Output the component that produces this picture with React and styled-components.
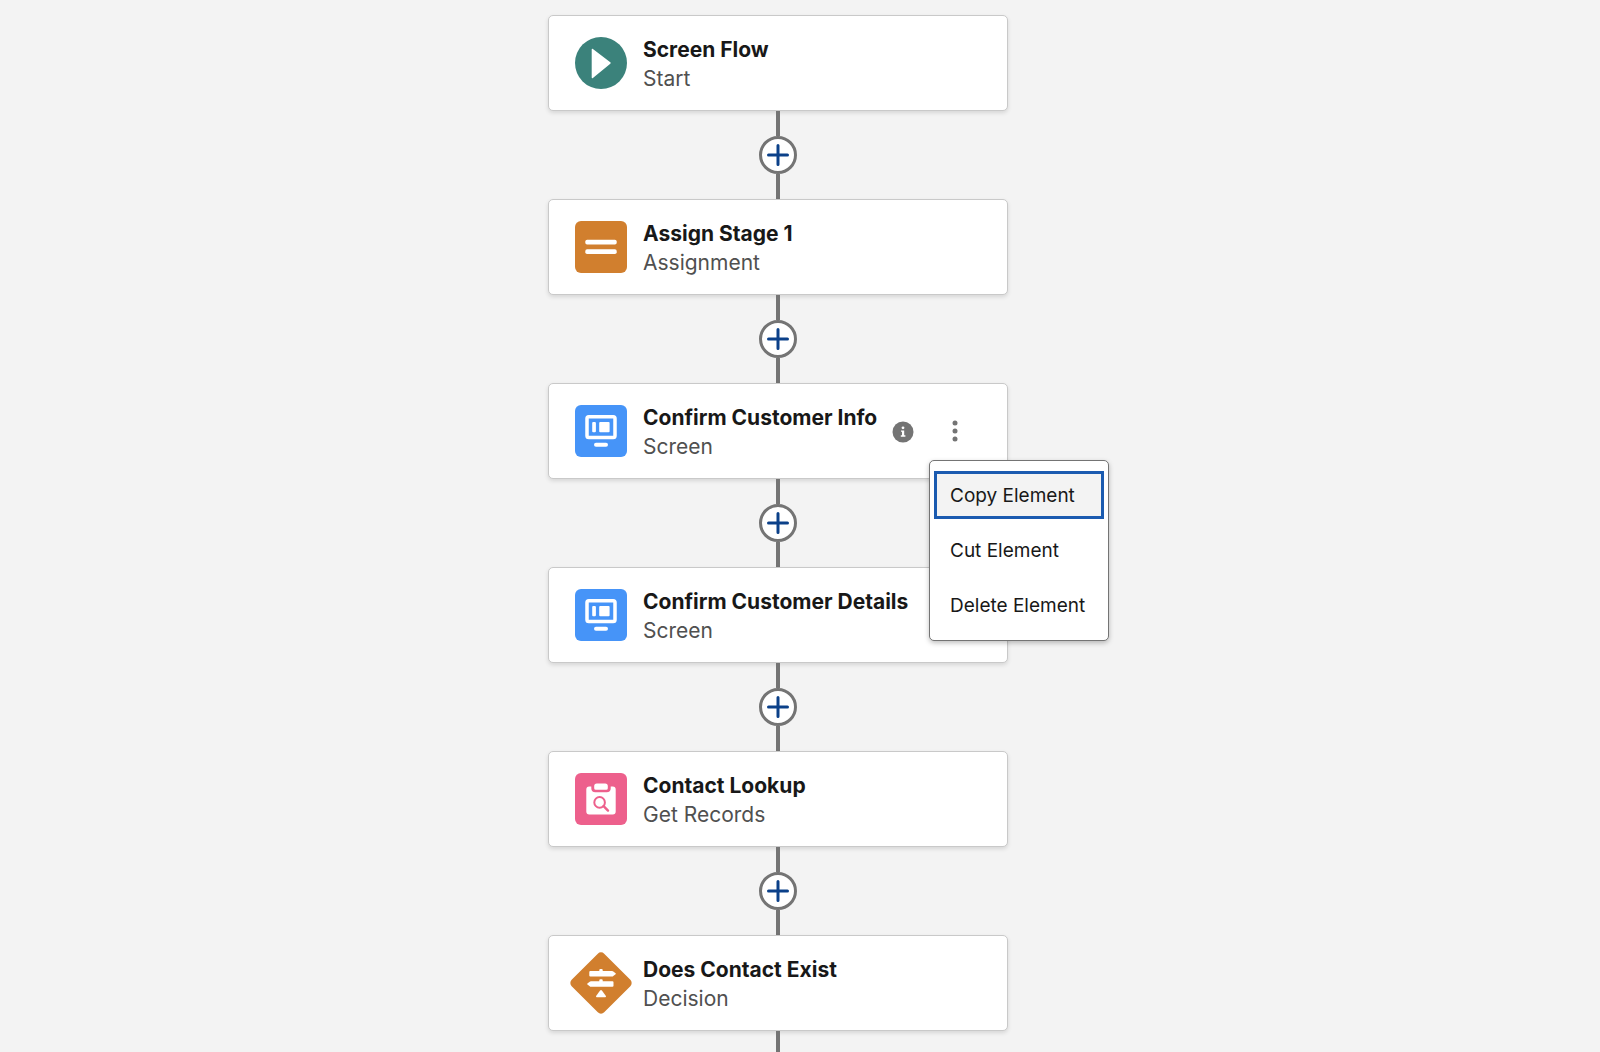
import React from "react";
import styled, { createGlobalStyle } from "styled-components";

const GlobalStyle = createGlobalStyle`
  * {
    box-sizing: border-box;
  }
  body {
    margin: 0;
    background-color: #f3f3f3;
    font-family: Inter, "Liberation Sans", sans-serif;
  }
`;

const Canvas = styled.main`
  display: flex;
  flex-direction: column;
  align-items: center;
  min-height: 100vh;
  padding: 15px 44px 0 0;
`;

const ElementCard = styled.article`
  display: flex;
  align-items: center;
  width: 460px;
  max-width: 100%;
  height: 96px;
  padding: 0 26px;
  background-color: #fff;
  border: 1px solid #c9c9c9;
  border-radius: 5px;
  box-shadow: 0 2px 4px rgba(0, 0, 0, 0.12);
`;

const ElementIcon = styled.svg`
  flex: none;
  width: 52px;
  height: 52px;
  margin-right: 16px;
  overflow: visible;
`;

const ElementText = styled.div`
  flex: 1;
  min-width: 0;
  padding-top: 2px;
  white-space: nowrap;
`;

const ElementTitle = styled.h2`
  margin: 0;
  font-size: 21px;
  font-weight: 700;
  line-height: 29px;
  color: #181818;
`;

const ElementType = styled.p`
  margin: 0;
  font-size: 21px;
  line-height: 29px;
  color: #505050;
`;

const InfoIcon = styled.svg`
  flex: none;
  width: 22px;
  height: 22px;
  margin: 2px 15px 0 0;
`;

const MenuAnchor = styled.div`
  position: relative;
  flex: none;
`;

const MenuTrigger = styled.button`
  display: flex;
  align-items: center;
  justify-content: center;
  width: 52px;
  height: 52px;
  padding: 0;
  background: none;
  border: none;
  cursor: pointer;
`;

const Menu = styled.div`
  position: absolute;
  top: calc(100% + 3px);
  left: 0;
  z-index: 10;
  display: flex;
  flex-direction: column;
  gap: 7px;
  width: 180px;
  padding: 10px 4px 11px;
  background-color: #fff;
  border: 1px solid #747474;
  border-radius: 5px;
  box-shadow: 0 2px 5px rgba(0, 0, 0, 0.25);
`;

const MenuItem = styled.button`
  height: 48px;
  padding: 0 0 0 13px;
  font-family: inherit;
  font-size: 19px;
  line-height: 29px;
  text-align: left;
  white-space: nowrap;
  color: #181818;
  background-color: ${({ $focused }) => ($focused ? "#f3f3f3" : "#fff")};
  border: 3px solid ${({ $focused }) => ($focused ? "#1b5bb0" : "transparent")};
  cursor: pointer;
`;

const Connector = styled.div`
  display: flex;
  flex-direction: column;
  align-items: center;
`;

const Line = styled.div`
  width: 4px;
  height: 25px;
  background-color: #747474;
`;

const TrailingLine = styled(Line)`
  flex: 1;
  height: auto;
  min-height: 20px;
`;

const AddButton = styled.button`
  display: flex;
  align-items: center;
  justify-content: center;
  width: 38px;
  height: 38px;
  padding: 0;
  background-color: #fff;
  border: 3px solid #747474;
  border-radius: 50%;
  cursor: pointer;
`;

const icons = {
  start: (
    <>
      <circle cx="26" cy="26" r="26" fill="#3b827b" />
      <path d="M16.7 12.6c0-.7.7-1 1.2-.5l17.4 13.2c.5.4.5 1 0 1.4L17.9 40.9c-.5.5-1.2.2-1.2-.5z" fill="#fff" />
    </>
  ),
  assignment: (
    <>
      <rect width="52" height="52" rx="6" fill="#d17f2e" />
      <rect x="10.3" y="18.8" width="31.4" height="4.8" rx="1.8" fill="#fff" />
      <rect x="10.3" y="28.2" width="31.4" height="4.8" rx="1.8" fill="#fff" />
    </>
  ),
  screen: (
    <>
      <rect width="52" height="52" rx="6" fill="#4694f8" />
      <rect x="12" y="11.7" width="28" height="20.8" rx="1.8" fill="none" stroke="#fff" strokeWidth="3.5" />
      <rect x="17.2" y="17" width="3.7" height="10.2" rx="1" fill="#fff" />
      <rect x="24.2" y="17" width="10.4" height="10.2" rx="1" fill="#fff" />
      <rect x="19" y="37.7" width="14" height="4.1" rx="2" fill="#fff" />
    </>
  ),
  records: (
    <>
      <rect width="52" height="52" rx="6" fill="#ed608c" />
      <path
        d="M14.3 13.6h2v1.7a4 4 0 0 0 4 4h11.4a4 4 0 0 0 4-4v-1.7h2a3 3 0 0 1 3 3v21.8a3 3 0 0 1-3 3H14.3a3 3 0 0 1-3-3V16.6a3 3 0 0 1 3-3z"
        fill="#fff"
      />
      <path d="M21.8 10.4h8.4a2.6 2.6 0 0 1 2.6 2.6v2.2a1.6 1.6 0 0 1-1.6 1.6H20.8a1.6 1.6 0 0 1-1.6-1.6V13a2.6 2.6 0 0 1 2.6-2.6z" fill="#fff" />
      <circle cx="24.6" cy="29.4" r="5.3" fill="none" stroke="#ed608c" strokeWidth="2" />
      <path d="M28.6 33.2l4.4 4.4" stroke="#ed608c" strokeWidth="2.4" strokeLinecap="round" />
    </>
  ),
  decision: (
    <>
      <rect x="3" y="3" width="46" height="46" rx="4.5" fill="#d17f2e" transform="rotate(45 26 26)" />
      <path
        d="M24.3 14v-1q0-1 1-1h1.4q1 0 1 1v1h9.4q.7 0 1.2.5l2.3 1.7q.6.5 0 1l-2.3 1.7q-.5.5-1.2.5H15.3q-1 0-1-1V15q0-1 1-1z"
        fill="#fff"
      />
      <path
        d="M24.3 24.3v-1q0-1 1-1h1.4q1 0 1 1v1h9.8q1 0 1 1v3.4q0 1-1 1H15.9q-.7 0-1.2-.5l-2.3-1.7q-.6-.5 0-1l2.3-1.7q.5-.5 1.2-.5z"
        fill="#fff"
      />
      <path d="M25.1 33.4q.9-1 1.8 0l4 5.7q.5 1.2-.8 1.2h-8.2q-1.3 0-.8-1.2z" fill="#fff" />
    </>
  ),
};

const elements = [
  { icon: "start", title: "Screen Flow", type: "Start" },
  { icon: "assignment", title: "Assign Stage 1", type: "Assignment" },
  { icon: "screen", title: "Confirm Customer Info", type: "Screen", menuOpen: true },
  { icon: "screen", title: "Confirm Customer Details", type: "Screen" },
  { icon: "records", title: "Contact Lookup", type: "Get Records" },
  { icon: "decision", title: "Does Contact Exist", type: "Decision" },
];

const actions = ["Copy Element", "Cut Element", "Delete Element"];

function ElementActions() {
  const [focused, setFocused] = React.useState(actions[0]);

  return (
    <>
      <InfoIcon viewBox="0 0 22 22" aria-hidden="true">
        <circle cx="11" cy="11" r="10.5" fill="#747474" />
        <circle cx="11" cy="6.8" r="1.4" fill="#fff" />
        <path d="M9 9.4h3.2v4.8h1.2v1.5H8.8v-1.5H10v-3.4H9z" fill="#fff" />
      </InfoIcon>
      <MenuAnchor>
        <MenuTrigger aria-label="Element actions" aria-haspopup="menu" aria-expanded="true">
          <svg width="6" height="22" viewBox="0 0 6 22" fill="#747474">
            <circle cx="3" cy="3" r="2.5" />
            <circle cx="3" cy="11" r="2.5" />
            <circle cx="3" cy="19" r="2.5" />
          </svg>
        </MenuTrigger>
        <Menu role="menu">
          {actions.map((action) => (
            <MenuItem
              key={action}
              role="menuitem"
              $focused={action === focused}
              onClick={() => setFocused(action)}
            >
              {action}
            </MenuItem>
          ))}
        </Menu>
      </MenuAnchor>
    </>
  );
}

export default function App() {
  return (
    <>
      <GlobalStyle />
      <Canvas>
        {elements.map((element, index) => (
          <React.Fragment key={element.title}>
            {index > 0 && (
              <Connector>
                <Line />
                <AddButton aria-label="Add element">
                  <svg width="22" height="22" viewBox="0 0 22 22">
                    <path d="M11 1.5v19M1.5 11h19" stroke="#0b4089" strokeWidth="3" strokeLinecap="round" />
                  </svg>
                </AddButton>
                <Line />
              </Connector>
            )}
            <ElementCard>
              <ElementIcon viewBox="0 0 52 52" aria-hidden="true">
                {icons[element.icon]}
              </ElementIcon>
              <ElementText>
                <ElementTitle>{element.title}</ElementTitle>
                <ElementType>{element.type}</ElementType>
              </ElementText>
              {element.menuOpen && <ElementActions />}
            </ElementCard>
          </React.Fragment>
        ))}
        <TrailingLine />
      </Canvas>
    </>
  );
}
